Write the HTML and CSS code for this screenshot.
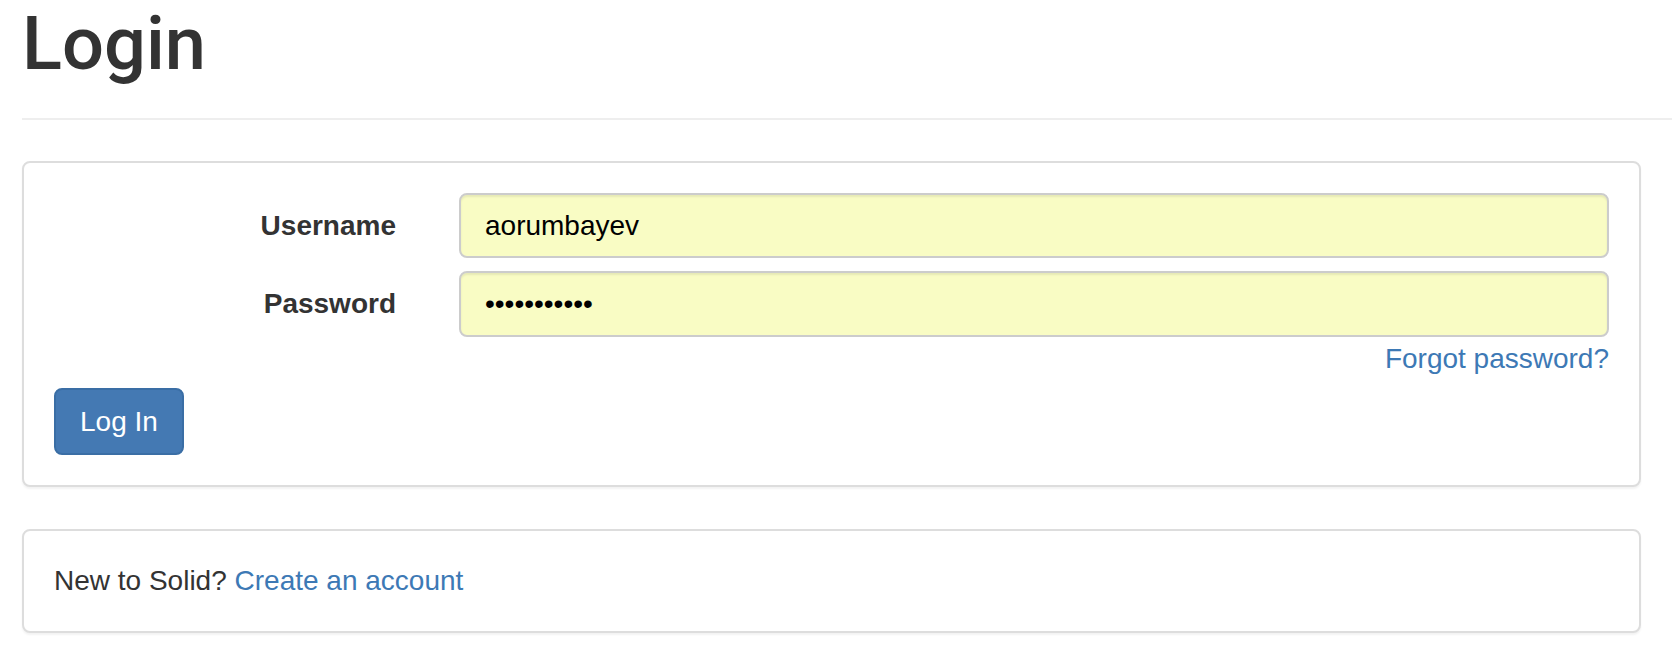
FILE: index.html
```html
<!DOCTYPE html>
<html lang="en">
<head>
<meta charset="utf-8">
<title>Login</title>
<link rel="stylesheet" href="styles.css">
</head>
<body>
<div class="page">
  <div class="page-header">
    <h1 class="title">Login</h1>
  </div>

  <div class="panel">
    <form class="login-form" onsubmit="return false">
      <div class="form-row">
        <label class="form-label" for="username">Username</label>
        <input class="form-input" id="username" type="text" value="aorumbayev">
      </div>
      <div class="form-row form-row-last">
        <label class="form-label" for="password">Password</label>
        <input class="form-input" id="password" type="password" value="abcdefghijk">
      </div>
      <div class="forgot-row">
        <a class="link" href="#">Forgot password?</a>
      </div>
      <button class="btn-primary" type="submit">Log In</button>
    </form>
  </div>

  <div class="panel panel-register">
    <p class="register-text">New to Solid? <a class="link" href="#">Create an account</a></p>
  </div>
</div>
</body>
</html>
```

FILE: styles.css
```css
* {
  box-sizing: border-box;
}

html, body {
  margin: 0;
  padding: 0;
  background: #ffffff;
}

body {
  font-family: "Liberation Sans", Arial, Helvetica, sans-serif;
  font-size: 28px;
  line-height: 40px;
  color: #333333;
}

.page {
  padding-left: 22px;
}

.page-header {
  padding-top: 4px;
  padding-bottom: 34px;
  border-bottom: 2px solid #eeeeee;
  margin-bottom: 41px;
}

.title {
  margin: 0;
  font-family: Roboto, "Liberation Sans", sans-serif;
  font-weight: 500;
  font-size: 74px;
  line-height: 80px;
  color: #333333;
}

.panel {
  margin-right: 31px;
  border: 2px solid #dddddd;
  border-radius: 8px;
  background: #ffffff;
  box-shadow: 0 2px 2px rgba(0, 0, 0, 0.05);
  padding: 30px;
  margin-bottom: 42px;
}

.login-form {
  margin: 0;
}

.form-row {
  display: grid;
  grid-template-columns: 342px 1fr;
  column-gap: 63px;
  align-items: center;
  margin-bottom: 13px;
}

.form-row-last {
  margin-bottom: 0;
}

.form-label {
  font-weight: bold;
  text-align: right;
  line-height: 40px;
}

.form-input {
  display: block;
  width: 100%;
  height: 65px;
  margin: 0;
  padding: 0 24px;
  border: 2px solid #cccccc;
  border-radius: 8px;
  background: #f9fcc4;
  box-shadow: inset 0 2px 2px rgba(0, 0, 0, 0.075);
  font-family: "Liberation Sans", Arial, sans-serif;
  font-size: 28px;
  line-height: 40px;
  color: #000000;
  outline: none;
}

#password {
  height: 66px;
}

.forgot-row {
  text-align: right;
  line-height: 40px;
  height: 42px;
  padding-top: 2px;
}

.link {
  color: #3d79b5;
  text-decoration: none;
}

.btn-primary {
  display: block;
  margin: 9px 0 0 0;
  height: 67px;
  padding: 0 24px;
  border: 2px solid #3a6ea5;
  border-radius: 8px;
  background: #4479b3;
  color: #ffffff;
  font-family: "Liberation Sans", Arial, sans-serif;
  font-size: 28px;
  line-height: 40px;
  cursor: pointer;
}

.panel-register {
  padding: 30px;
}

.register-text {
  margin: 0;
  line-height: 40px;
  height: 40px;
}
```
